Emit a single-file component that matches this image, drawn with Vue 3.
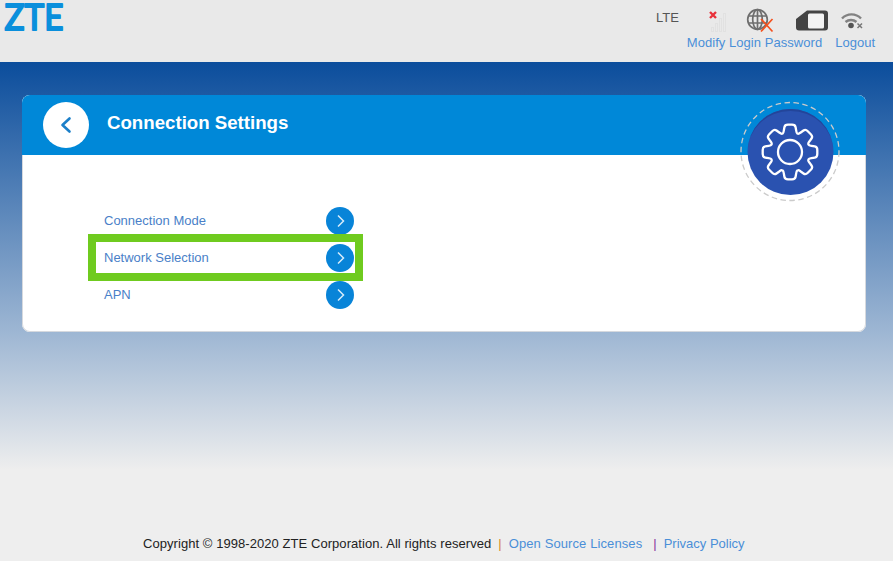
<template>
  <div class="page">
    <header class="top">
      <svg class="logo" width="72" height="36" viewBox="0 0 72 36">
        <text x="4.500" y="30" textLength="59" lengthAdjust="spacingAndGlyphs">ZTE</text>
      </svg>
      <div class="top-right">
        <div class="status">
          <span class="net">LTE</span>
          <svg class="ico-signal" width="24" height="32" viewBox="0 0 24 32">
            <g fill="#e9e9e9" stroke="#e1e1e1">
              <rect x="5.500" y="27.500" width="2" height="4" />
              <rect x="9.500" y="23.500" width="2" height="8" />
              <rect x="13.500" y="18.500" width="2" height="13" />
              <rect x="17.500" y="13.500" width="2" height="18" />
            </g>
            <path d="M4 12l6 6M10 12l-6 6" stroke="#e8313a" stroke-width="2.400" fill="none" />
          </svg>
          <svg class="ico-globe" width="28" height="33" viewBox="0 0 28 33">
            <g fill="none" stroke="#6e6e6e" stroke-width="1.700">
              <circle cx="11.500" cy="19.500" r="9.800" />
              <ellipse cx="11.500" cy="19.500" rx="4.800" ry="9.800" />
              <path d="M11.500 10v19M2.500 16h18M2.500 23h18" />
            </g>
            <path d="M15 19l11.500 12.500M26.500 19L15 31.500" stroke="#f4511e" stroke-width="1.700" fill="none" />
          </svg>
          <svg class="ico-sim" width="33" height="21" viewBox="0 0 33 21">
            <path d="M11 0.500H29a3 3 0 0 1 3 3V17.500a3 3 0 0 1-3 3H3a3 3 0 0 1-3-3V9z" fill="#444" />
            <rect x="12" y="3.500" width="16" height="15" rx="1.500" fill="#f3f3f3" />
          </svg>
          <svg class="ico-wifi" width="24" height="20" viewBox="0 0 24 20">
            <g fill="none" stroke="#828282" stroke-width="2.400">
              <path d="M1 6.500A13 13 0 0 1 20 6.500" />
              <path d="M4.500 10A8.500 8.500 0 0 1 15.500 10" />
            </g>
            <circle cx="10" cy="13.500" r="2.800" fill="#555" />
            <path d="M16.500 11.500l4.500 4.500M21 11.500l-4.500 4.500" stroke="#777" stroke-width="1.500" fill="none" />
          </svg>
        </div>
        <nav class="links">
          <a class="pwd">Modify Login Password</a>
          <a>Logout</a>
        </nav>
      </div>
    </header>

    <main class="band">
      <section class="card">
        <div class="card-head">
          <div class="back">
            <svg width="14" height="20" viewBox="0 0 14 20">
              <path d="M10.500 3.500L3.500 10l7 6.500" fill="none" stroke="#1b7fc9" stroke-width="2.600" stroke-linecap="round" stroke-linejoin="round" />
            </svg>
          </div>
          <h1 class="title">Connection Settings</h1>
        </div>
        <ul class="menu">
          <li v-for="item in items" :key="item" class="menu-row">
            <span class="menu-label">{{ item }}</span>
            <span class="go">
              <svg width="10" height="14" viewBox="0 0 10 14">
                <path d="M3 1.500L8.500 7 3 12.500" fill="none" stroke="#d7ecfa" stroke-width="1.500" />
              </svg>
            </span>
          </li>
        </ul>
        <div class="highlight"></div>
        <div class="gear-badge">
          <svg width="100" height="102" viewBox="0 0 100 102">
            <circle cx="50" cy="50.500" r="49" fill="none" stroke="#cbcbcb" stroke-width="1.300" stroke-dasharray="5.500 3.500" />
            <circle cx="50.500" cy="51" r="43" fill="#2a52b0" />
            <path d="M7.500 51a43 43 0 0 1 86 0a43 41 0 0 0-86 0z" fill="#23459a" />
            <path :d="gearPath" fill="none" stroke="#fff" stroke-width="2.300" stroke-linejoin="round" />
            <circle cx="50" cy="51" r="12" fill="none" stroke="#fff" stroke-width="2.300" />
          </svg>
        </div>
      </section>
    </main>

    <footer class="foot">
      <span class="copy">Copyright © 1998-2020 ZTE Corporation. All rights reserved</span>
      <span class="sep orange">|</span>
      <a class="oss">Open Source Licenses</a>
      <span class="sep purple">|</span>
      <a>Privacy Policy</a>
    </footer>
  </div>
</template>

<script setup>
import { computed } from 'vue';

const items = ['Connection Mode', 'Network Selection', 'APN'];

// eight teeth round the centre of the badge, corners rounded with Q segments
const gearPath = computed(() => {
  const cx = 50;
  const cy = 51;
  const pts = [];
  for (let i = 0; i < 8; i++) {
    const a = (i / 8) * Math.PI * 2;
    [[-0.86, 20], [-0.48, 27.8], [0.48, 27.8], [0.86, 20]].forEach(([k, r]) => {
      const t = a + (k * Math.PI) / 8;
      pts.push([cx + r * Math.cos(t), cy + r * Math.sin(t)]);
    });
  }
  const mix = (p, q, f) => [p[0] + (q[0] - p[0]) * f, p[1] + (q[1] - p[1]) * f];
  const fmt = (p) => p[0].toFixed(1) + ' ' + p[1].toFixed(1);
  let d = '';
  pts.forEach((p, i) => {
    const prev = pts[(i + pts.length - 1) % pts.length];
    const next = pts[(i + 1) % pts.length];
    d += (i ? 'L' : 'M') + fmt(mix(p, prev, 0.3)) + 'Q' + fmt(p) + ' ' + fmt(mix(p, next, 0.3));
  });
  return d + 'Z';
});
</script>

<style>
html, body {
  margin: 0;
  background: #eeeeee;
}
</style>

<style scoped>
.page {
  width: 893px;
  height: 561px;
  overflow: hidden;
  display: flex;
  flex-direction: column;
  font-family: "Liberation Sans", Arial, sans-serif;
  background: #eeeeee;
}

.top {
  height: 62px;
  flex: none;
  background: #e9e9e9;
  display: flex;
  justify-content: space-between;
}

.logo text {
  font-family: "Lato", sans-serif;
  font-size: 37px;
  font-weight: 400;
  fill: #0a8fdc;
  stroke: #0a8fdc;
  stroke-width: 2;
  stroke-linejoin: round;
}

.top-right {
  padding-right: 18px;
  display: flex;
  flex-direction: column;
  align-items: flex-end;
}

.status {
  height: 35px;
  display: flex;
  align-items: flex-start;
}

.net {
  font-size: 13px;
  line-height: 16px;
  color: #555;
  margin: 10px 27px 0 0;
}

.ico-globe { margin-left: 16px; }
.ico-sim { margin: 10px 0 0 22px; }
.ico-wifi { margin: 12px 10px 0 12px; }

.links {
  display: flex;
  gap: 13px;
  font-size: 13px;
  line-height: 16px;
  color: #4a8fd8;
}

.pwd {
  letter-spacing: 0.05px;
}

.band {
  height: 408px;
  flex: none;
  padding: 33px 27px 0 22px;
  box-sizing: border-box;
  background: linear-gradient(#0b4d9c 0%, #9db6d3 66%, #eeeeee 100%);
}

.card {
  position: relative;
  height: 237px;
  background: #fff;
  border-radius: 8px;
  box-shadow: inset 0 0 0 1px #d6d9de;
}

.card-head {
  height: 60px;
  background: #0088d8;
  border-radius: 8px 8px 0 0;
  display: flex;
  align-items: flex-start;
  padding: 7px 0 0 21px;
  box-sizing: border-box;
}

.back {
  width: 46px;
  height: 46px;
  border-radius: 50%;
  background: #fff;
  display: flex;
  align-items: center;
  justify-content: center;
}

.title {
  margin: 10px 0 0 18px;
  font-size: 18.67px;
  line-height: 22px;
  font-weight: 700;
  color: #fff;
}

.menu {
  list-style: none;
  margin: 0;
  padding: 47px 0 0 82px;
  width: 250px;
}

.menu-row {
  height: 37px;
  display: flex;
  align-items: center;
  justify-content: space-between;
}

.menu-label {
  font-size: 13px;
  color: #4a7fc8;
}

.go {
  width: 28px;
  height: 28px;
  border-radius: 50%;
  background: #0884d8;
  display: flex;
  align-items: center;
  justify-content: center;
}

.highlight {
  position: absolute;
  left: 66px;
  top: 139px;
  width: 275px;
  height: 47px;
  box-sizing: border-box;
  border: 8px solid #6fcb1f;
  pointer-events: none;
}

.gear-badge {
  position: absolute;
  left: 718px;
  top: 6px;
  width: 100px;
  height: 102px;
}

.foot {
  flex: 1;
  display: flex;
  align-items: center;
  font-size: 13px;
  color: #222;
  padding: 56px 0 0 143px;
}

.copy {
  letter-spacing: 0.06px;
}

.oss {
  letter-spacing: 0.1px;
}

.foot a {
  color: #4a8fd8;
}

.sep {
  margin: 0 7px;
}

.orange { color: #d98a2b; }
.purple { color: #8a2f9e; margin-left: 11px; }
</style>
